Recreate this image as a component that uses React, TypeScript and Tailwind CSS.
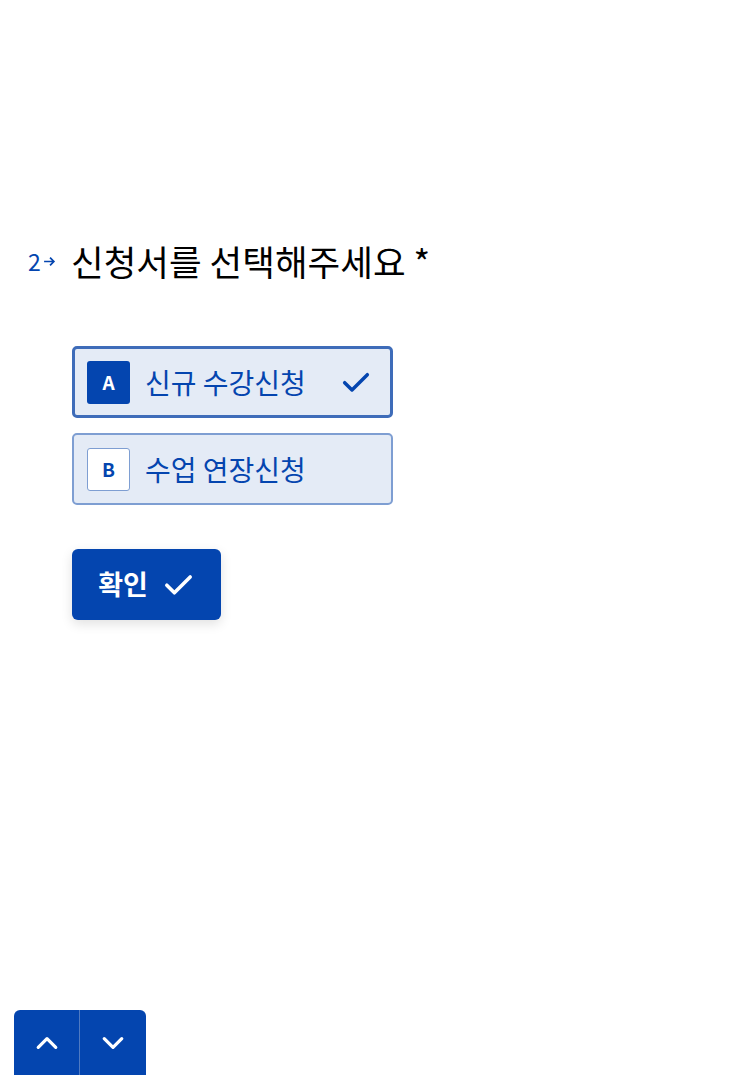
import React from "react";

const font = { fontFamily: '"Noto Sans CJK KR", "Noto Sans", sans-serif' };

const Check = ({ className }: { className?: string }) => (
  <svg viewBox="0 0 24 24" className={className} fill="none" stroke="currentColor" strokeWidth={2.6} strokeLinecap="round" strokeLinejoin="round">
    <path d="M3.5 12.5l5.5 5.5L20.5 6.5" />
  </svg>
);

const options = [
  { key: "A", label: "신규 수강신청", selected: true },
  { key: "B", label: "수업 연장신청", selected: false },
];

export default function App() {
  return (
    <div className="h-[1075px] bg-white flex flex-col font-['Noto_Sans_CJK_KR',sans-serif]" style={font}>
      <div className="pt-[236px] pl-[28px] flex items-center">
        <span className="w-[43px] flex items-center text-[23px] text-[#0445af]">
          2
          <svg viewBox="0 0 12 12" className="w-[13px] h-[13px] ml-[2px]" fill="none" stroke="currentColor" strokeWidth={1.6}>
            <path d="M1 6h9M6.5 2.5L10 6l-3.5 3.5" />
          </svg>
        </span>
        <h1 className="text-[35.5px] text-black leading-[50px]">신청서를 선택해주세요 *</h1>
      </div>

      <div className="pl-[72px] mt-[60px] flex flex-col gap-[15px]">
        {options.map((o) => (
          <div
            key={o.key}
            className={
              o.selected
                ? "w-[321px] h-[72px] rounded-[5px] border-[3px] border-[#3e6cb9] bg-[#e4ebf6] flex items-center pl-[12px] pr-[18px]"
                : "w-[321px] h-[72px] rounded-[5px] border-[2px] border-[#7e9ed2] bg-[#e4ebf6] flex items-center pl-[13px] pr-[18px]"
            }
          >
            <span
              className={
                o.selected
                  ? "w-[43px] h-[43px] rounded-[3px] bg-[#0445af] text-white flex items-center justify-center text-[19px] font-bold"
                  : "w-[43px] h-[43px] rounded-[3px] bg-white border border-[#7e9ed2] text-[#0445af] flex items-center justify-center text-[19px] font-bold"
              }
            >
              {o.key}
            </span>
            <span className="ml-[15px] text-[28px] text-[#0445af] flex-1">{o.label}</span>
            {o.selected && <Check className="w-[32px] h-[32px] text-[#0445af]" />}
          </div>
        ))}
      </div>

      <div className="pl-[72px] mt-[44px]">
        <button className="w-[149px] h-[71px] rounded-[6px] bg-[#0445af] text-white flex items-center justify-center gap-[14px] shadow-[0_4px_12px_rgba(0,0,0,0.12)]">
          <span className="text-[27px] font-bold">확인</span>
          <Check className="w-[33px] h-[33px]" />
        </button>
      </div>

      <div className="mt-auto pl-[14px] flex">
        <div className="flex h-[65px] rounded-t-[6px] overflow-hidden bg-[#0445af]">
          <button className="w-[66px] flex items-center justify-center text-white border-r border-[#4f7ac2]">
            <svg viewBox="0 0 24 24" className="w-[30px] h-[30px]" fill="none" stroke="currentColor" strokeWidth={2.6} strokeLinecap="round" strokeLinejoin="round">
              <path d="M5 15.5l7-7 7 7" />
            </svg>
          </button>
          <button className="w-[66px] flex items-center justify-center text-white">
            <svg viewBox="0 0 24 24" className="w-[30px] h-[30px]" fill="none" stroke="currentColor" strokeWidth={2.6} strokeLinecap="round" strokeLinejoin="round">
              <path d="M5 8.5l7 7 7-7" />
            </svg>
          </button>
        </div>
      </div>
    </div>
  );
}
